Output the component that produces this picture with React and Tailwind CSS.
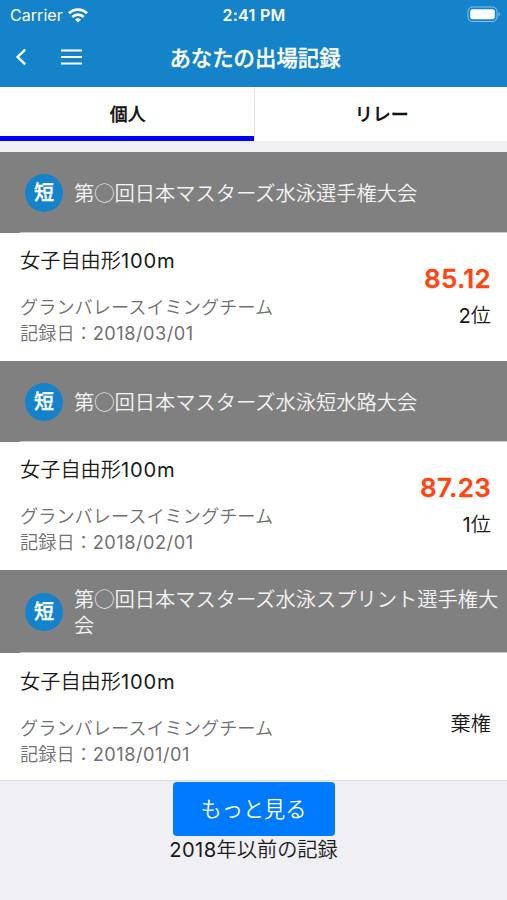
import { useState } from 'react';

const tabs = ['個人', 'リレー'];

const records = [
  {
    id: 1,
    course: '短',
    meet: '第◯回日本マスターズ水泳選手権大会',
    event: '女子自由形',
    distance: '100m',
    team: 'グランバレースイミングチーム',
    date: '2018/03/01',
    time: '85.12',
    rank: '位',
    place: 2,
    headClass: 'h-[80px]',
    bodyClass: 'h-[128px]',
  },
  {
    id: 2,
    course: '短',
    meet: '第◯回日本マスターズ水泳短水路大会',
    event: '女子自由形',
    distance: '100m',
    team: 'グランバレースイミングチーム',
    date: '2018/02/01',
    time: '87.23',
    rank: '位',
    place: 1,
    headClass: 'h-[80px]',
    bodyClass: 'h-[128px]',
  },
  {
    id: 3,
    course: '短',
    meet: '第◯回日本マスターズ水泳スプリント選手権大会',
    event: '女子自由形',
    distance: '100m',
    team: 'グランバレースイミングチーム',
    date: '2018/01/01',
    rank: '棄権',
    headClass: 'h-[82px]',
    bodyClass: 'h-[127px]',
  },
];

function StatusBar() {
  return (
    <div className="grid h-[30px] grid-cols-3 items-center pl-[10px] pr-[7px] text-[16px] leading-none">
      <div className="flex items-center gap-[5px]">
        <span className="tracking-[0.05px]">Carrier</span>
        <svg width="20" height="15" viewBox="0 0 20 15" fill="none" stroke="currentColor" strokeWidth="2.7">
          <path d="M1 5.2C6 .4 14 .4 19 5.2" />
          <path d="M4.3 8.9c3.3-3 8.1-3 11.4 0" />
          <path d="M10 14.4l-3-3c1.7-1.5 4.3-1.5 6 0z" fill="currentColor" stroke="none" />
        </svg>
      </div>
      <span className="-ml-[2px] text-center text-[16px] font-semibold tracking-[0.3px] whitespace-nowrap">2:41 PM</span>
      <svg className="mb-[2px] justify-self-end" width="33" height="17" viewBox="0 0 33 17">
        <rect x="1" y="1" width="29" height="14.5" rx="4.5" fill="none" stroke="#fff" strokeOpacity=".5" />
        <rect x="3.2" y="3.2" width="24.6" height="10.1" rx="2.4" fill="#fff" />
        <path d="M31.5 6v4.6c1.8-.6 1.8-4 0-4.6z" fill="#fff" fillOpacity=".5" />
      </svg>
    </div>
  );
}

function NavBar() {
  return (
    <div className="grid h-[57px] grid-cols-[1fr_auto_1fr] items-center pb-[3px]">
      <div className="flex items-center pl-[15px]">
        <button aria-label="戻る">
          <svg width="12" height="18" viewBox="0 0 12 18" fill="none" stroke="currentColor" strokeWidth="2.4">
            <path d="M10.2 1.6 2.6 9l7.6 7.4" />
          </svg>
        </button>
        <button aria-label="メニュー" className="ml-[34px]">
          <svg width="21" height="16" viewBox="0 0 21 16" stroke="currentColor" strokeWidth="2">
            <path d="M0 1.5h21M0 8h21M0 14.5h21" />
          </svg>
        </button>
      </div>
      <h1 className="pt-[3px] pl-[3px] text-[21.4px] leading-none font-medium [-webkit-text-stroke:0.3px]">あなたの出場記録</h1>
    </div>
  );
}

function Record({ record }) {
  return (
    <li>
      <div className={`flex items-center bg-[#808080] pt-px pr-1 pl-[25px] ${record.headClass}`}>
        <span className="flex size-[38px] shrink-0 items-center justify-center rounded-full bg-[#1583cb] pt-px text-[20px] leading-none font-medium text-white [-webkit-text-stroke:0.3px]">
          {record.course}
        </span>
        <h2 className="ml-[11px] font-['Noto_Sans_CJK_JP',sans-serif] text-[20.25px] leading-[26px] font-[350] break-all text-[#f4f4f4]">
          {record.meet}
        </h2>
      </div>
      <div className="h-px bg-[#c8c7cc] border-l-20 border-[#808080]" />
      <div className={`flex justify-between bg-white pr-4 pl-5 ${record.bodyClass}`}>
        <div className={record.time ? 'pt-[15px]' : 'pt-[16px]'}>
          <h3 className="text-[20.2px] leading-[26px] font-[350] text-[#1a1a1a]">
            {record.event}<span className="font-normal tracking-[0.8px]">{record.distance}</span>
          </h3>
          <div className="mt-[20px] text-[18.2px] leading-[26px] font-[350] text-[#707070]">
            <p>{record.team}</p>
            <p>記録日：<span className="font-normal tracking-[0.5px]">{record.date}</span></p>
          </div>
        </div>
        <div className={`flex flex-col items-end text-[#1a1a1a] ${record.time ? 'pt-[29px]' : 'pt-[58px]'}`}>
          {record.time && (
            <p className="mb-[7px] text-[26px] leading-[34px] font-semibold tracking-[0.3px] text-[#ff4411] [-webkit-text-stroke:0.3px]">
              {record.time}
            </p>
          )}
          <p className="text-[20.2px] leading-[26px] font-[350]">
            {record.place && <span className="font-normal">{record.place}</span>}
            {record.rank}
          </p>
        </div>
      </div>
    </li>
  );
}

export default function App() {
  const [active, setActive] = useState(0);

  return (
    <div className="h-[900px] overflow-hidden bg-[#efeff4] font-['Inter','Noto_Sans_CJK_JP',sans-serif]">
      <header className="bg-[#1583c9] text-white">
        <StatusBar />
        <NavBar />
      </header>

      <nav className="grid h-[54px] grid-cols-2 bg-white">
        {tabs.map((tab, i) => (
          <button
            key={tab}
            onClick={() => setActive(i)}
            className={`border-b-[5px] pt-[6px] pl-[2px] text-[18px] leading-none font-medium text-[#111] [-webkit-text-stroke:0.3px] ${active === i ? 'border-b-[#0000f5]' : 'border-b-white'} ${i > 0 ? 'border-l border-l-[#e6e6ea]' : ''}`}
          >
            {tab}
          </button>
        ))}
      </nav>

      <ul className="mt-[11px] border-b border-[#dcdce0]">
        {records.map(r => <Record key={r.id} record={r} />)}
      </ul>

      <div className="flex flex-col items-center pt-px">
        <button className="h-[54px] w-[162px] rounded-[4px] bg-[#007aff] pt-px text-[21.2px] leading-none font-[350] text-white">もっと見る</button>
        <p className="mt-px text-[20.2px] leading-[26px] font-[350] text-[#1a1a1a]">
          <span className="font-normal tracking-[0.4px]">2018</span>年以前の記録
        </p>
      </div>
    </div>
  );
}
